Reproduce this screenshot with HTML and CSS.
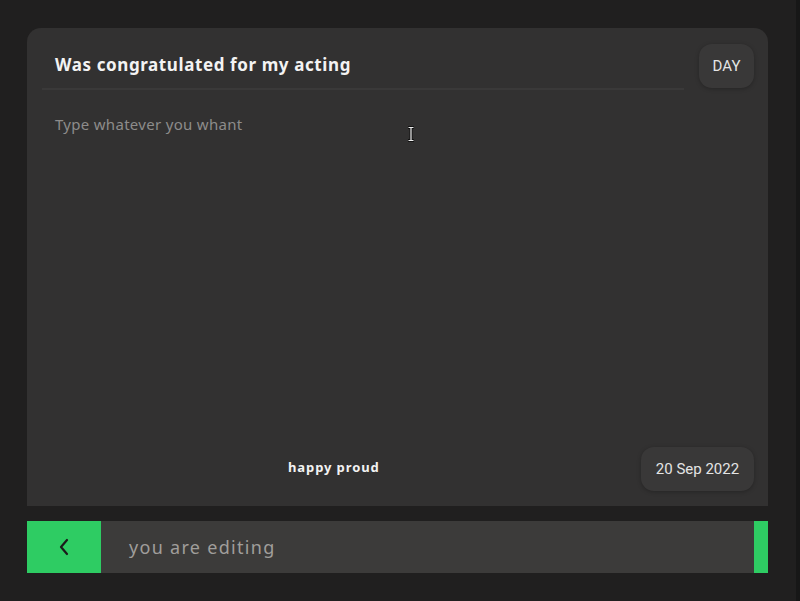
FILE: index.html
```html
<!DOCTYPE html>
<html>
<head>
<meta charset="utf-8">
<link rel="stylesheet" href="styles.css">
</head>
<body>
<div class="page">
  <section class="card">
    <header class="card-head">
      <h1 class="title">Was congratulated for my acting</h1>
      <button class="chip chip-day">DAY</button>
    </header>
    <div class="body">
      <p class="placeholder">Type whatever you whant</p>
      <svg class="cursor" width="8" height="16" viewBox="0 0 8 16"><path d="M1 1.5 H7 M4 1.5 V14.5 M1 14.5 H7" fill="none" stroke="#111" stroke-width="3"/><path d="M1.5 1.5 H6.5 M4 1.5 V14.5 M1.5 14.5 H6.5" fill="none" stroke="#eee" stroke-width="1.2"/></svg>
    </div>
    <footer class="card-foot">
      <span class="tags">happy proud</span>
      <button class="chip chip-date">20 Sep 2022</button>
    </footer>
  </section>
  <nav class="bar">
    <div class="back">
      <svg width="14" height="18" viewBox="0 0 14 18"><path d="M10 2 L4 9 L10 16" fill="none" stroke="#1b1b1b" stroke-width="2.2" stroke-linecap="round" stroke-linejoin="round"/></svg>
    </div>
    <div class="status">you are editing</div>
    <div class="edge"></div>
  </nav>
</div>
</body>
</html>
```
FILE: styles.css
```css
* { box-sizing: border-box; }
html, body { margin: 0; padding: 0; }
body {
  background: #201f1f;
  width: 800px;
  height: 601px;
  overflow: hidden;
  font-family: "Noto Sans", "DejaVu Sans", sans-serif;
  border-right: 4px solid #171717;
}
.page {
  padding: 28px 28px 0 27px;
  display: flex;
  flex-direction: column;
  gap: 15px;
}
.card {
  background: #323131;
  border-radius: 14px 14px 0 0;
  height: 478px;
  display: flex;
  flex-direction: column;
  padding: 16px 14px 15px 15px;
}
.card-head {
  display: flex;
  align-items: flex-start;
  gap: 15px;
}
.title {
  flex: 1;
  margin: 0;
  font-size: 17px;
  font-weight: 700;
  color: #f3f3f3;
  letter-spacing: 0.6px;
  padding: 8px 0 11px 13px;
  line-height: 25px;
  border-bottom: 2px solid #3a3939;
}
.chip {
  border: none;
  background: #393838;
  color: #e4e4e4;
  border-radius: 13px;
  font-family: "Roboto", "Liberation Sans", sans-serif;
  font-size: 15px;
  box-shadow: 0 1px 4px rgba(0,0,0,0.25);
  padding: 0;
}
.chip-day { width: 55px; height: 44px; }
.body {
  flex: 1;
  position: relative;
}
.placeholder {
  margin: 24px 0 0 13px;
  font-size: 15px;
  color: #8d8c8b;
  letter-spacing: 0.3px;
}
.cursor {
  position: absolute;
  left: 365px;
  top: 36px;
}
.card-foot {
  display: flex;
  align-items: center;
  justify-content: space-between;
  padding-left: 246px;
}
.tags {
  font-size: 13px;
  font-weight: 700;
  color: #f2f2f2;
  letter-spacing: 0.9px;
  margin-top: -4px;
}
.chip-date { width: 113px; height: 44px; }
.bar {
  display: flex;
  height: 52px;
  background: #3c3b3a;
}
.back {
  width: 74px;
  background: #2ecc63;
  display: flex;
  align-items: center;
  justify-content: center;
}
.status {
  flex: 1;
  display: flex;
  align-items: center;
  padding-left: 28px;
  font-size: 18px;
  color: #a09e9b;
  letter-spacing: 1.3px;
}
.edge { width: 14px; background: #2ecc63; }
```
